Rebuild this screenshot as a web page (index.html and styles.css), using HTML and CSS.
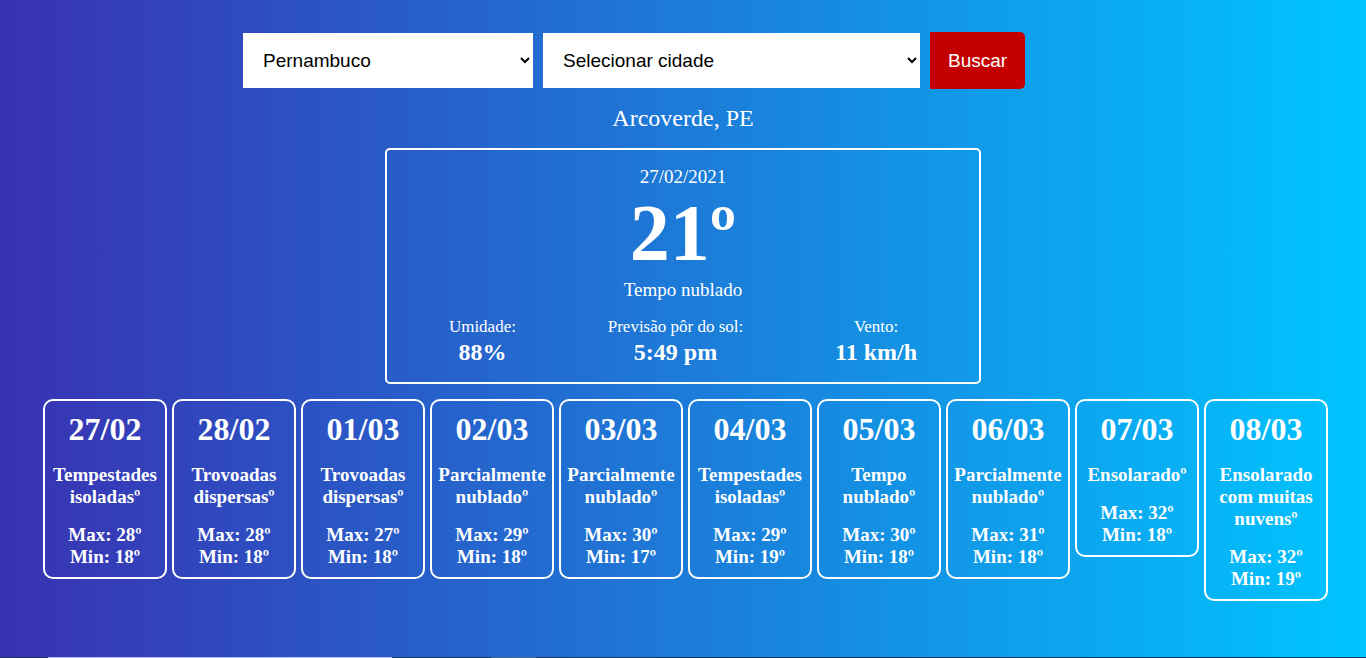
FILE: index.html
```html
<!DOCTYPE html>
<html lang="pt-BR">
<head>
<meta charset="utf-8">
<title>Previsão do tempo</title>
<link rel="stylesheet" href="styles.css">
</head>
<body>
<main class="page">
  <form class="search">
    <select class="search-select state" aria-label="Estado"><option>Pernambuco</option></select>
    <select class="search-select city" aria-label="Cidade"><option>Selecionar cidade</option></select>
    <button class="search-button" type="button">Buscar</button>
  </form>
  <h1 class="place">Arcoverde, PE</h1>
  <section class="today">
    <p class="today-text">27/02/2021</p>
    <p class="today-temp">21º</p>
    <p class="today-text">Tempo nublado</p>
    <dl class="details">
      <div class="detail"><dt>Umidade:</dt><dd>88%</dd></div>
      <div class="detail"><dt>Previsão pôr do sol:</dt><dd>5:49 pm</dd></div>
      <div class="detail"><dt>Vento:</dt><dd>11 km/h</dd></div>
    </dl>
  </section>
  <section class="forecast">
    <article class="day"><h2>27/02</h2><p>Tempestades isoladasº</p><p>Max: 28º<br>Min: 18º</p></article>
    <article class="day"><h2>28/02</h2><p>Trovoadas dispersasº</p><p>Max: 28º<br>Min: 18º</p></article>
    <article class="day"><h2>01/03</h2><p>Trovoadas dispersasº</p><p>Max: 27º<br>Min: 18º</p></article>
    <article class="day"><h2>02/03</h2><p>Parcialmente nubladoº</p><p>Max: 29º<br>Min: 18º</p></article>
    <article class="day"><h2>03/03</h2><p>Parcialmente nubladoº</p><p>Max: 30º<br>Min: 17º</p></article>
    <article class="day"><h2>04/03</h2><p>Tempestades isoladasº</p><p>Max: 29º<br>Min: 19º</p></article>
    <article class="day"><h2>05/03</h2><p>Tempo nubladoº</p><p>Max: 30º<br>Min: 18º</p></article>
    <article class="day"><h2>06/03</h2><p>Parcialmente nubladoº</p><p>Max: 31º<br>Min: 18º</p></article>
    <article class="day"><h2>07/03</h2><p>Ensolaradoº</p><p>Max: 32º<br>Min: 18º</p></article>
    <article class="day"><h2>08/03</h2><p>Ensolarado com muitas nuvensº</p><p>Max: 32º<br>Min: 19º</p></article>
  </section>
</main>
<footer class="edge"><span class="edge-light"></span><span class="edge-mid"></span></footer>
</body>
</html>
```

FILE: styles.css
```css
* {
  box-sizing: border-box;
  margin: 0;
}

body {
  min-height: 100vh;
  display: flex;
  flex-direction: column;
  background: linear-gradient(to right, #3931b1, #00c5ff);
  color: #fff;
  font-family: "Liberation Serif", "Times New Roman", serif;
}

.page {
  flex: 1;
  padding: 32px 38px 0;
}

.search {
  display: flex;
  align-items: center;
  gap: 10px;
  max-width: 880px;
  margin: 0 auto;
}

.search-select,
.search-button {
  font-family: "Liberation Sans", Arial, sans-serif;
  font-size: 19px;
  border: 0;
}

.search-select {
  height: 55px;
  padding: 0 2px 0 16px;
  background: #fff;
  color: #000;
}

.state {
  width: 290px;
}

.city {
  width: 377px;
}

.search-button {
  height: 57px;
  padding: 0 18px;
  background: #c40000;
  color: #fff;
  border-radius: 0 5px 5px 0;
}

.place {
  margin: 15px 0 16px;
  font-size: 24px;
  font-weight: 400;
  line-height: 28px;
  text-align: center;
}

.today {
  max-width: 596px;
  margin: 0 auto;
  padding: 16px 16px 14px;
  border: 2px solid #fff;
  border-radius: 5px;
  text-align: center;
}

.today-text {
  font-size: 19px;
  line-height: 22px;
}

.today-temp {
  font-size: 80px;
  font-weight: 700;
  line-height: 91px;
}

.details {
  display: flex;
  justify-content: space-around;
  margin-top: 16px;
}

.detail dt {
  font-size: 17px;
  line-height: 19px;
}

.detail dd {
  font-size: 24px;
  font-weight: 700;
  line-height: 32px;
}

.forecast {
  display: grid;
  grid-template-columns: repeat(10, 1fr);
  align-items: start;
  gap: 5px;
  padding-left: 5px;
  margin-top: 15px;
}

.day {
  padding: 10px 4px 9px;
  border: 2px solid #fff;
  border-radius: 10px;
  text-align: center;
  font-size: 19px;
  font-weight: 700;
  line-height: 22px;
}

.day h2 {
  font-size: 32px;
  line-height: 37px;
}

.day p {
  margin-top: 16px;
}

.edge {
  display: flex;
  height: 1px;
  padding-left: 48px;
  background: #12375a;
}

.edge-light {
  width: 344px;
  background: #b4c4ec;
}

.edge-mid {
  width: 45px;
  margin-left: 99px;
  background: #3f6a8c;
}
```
